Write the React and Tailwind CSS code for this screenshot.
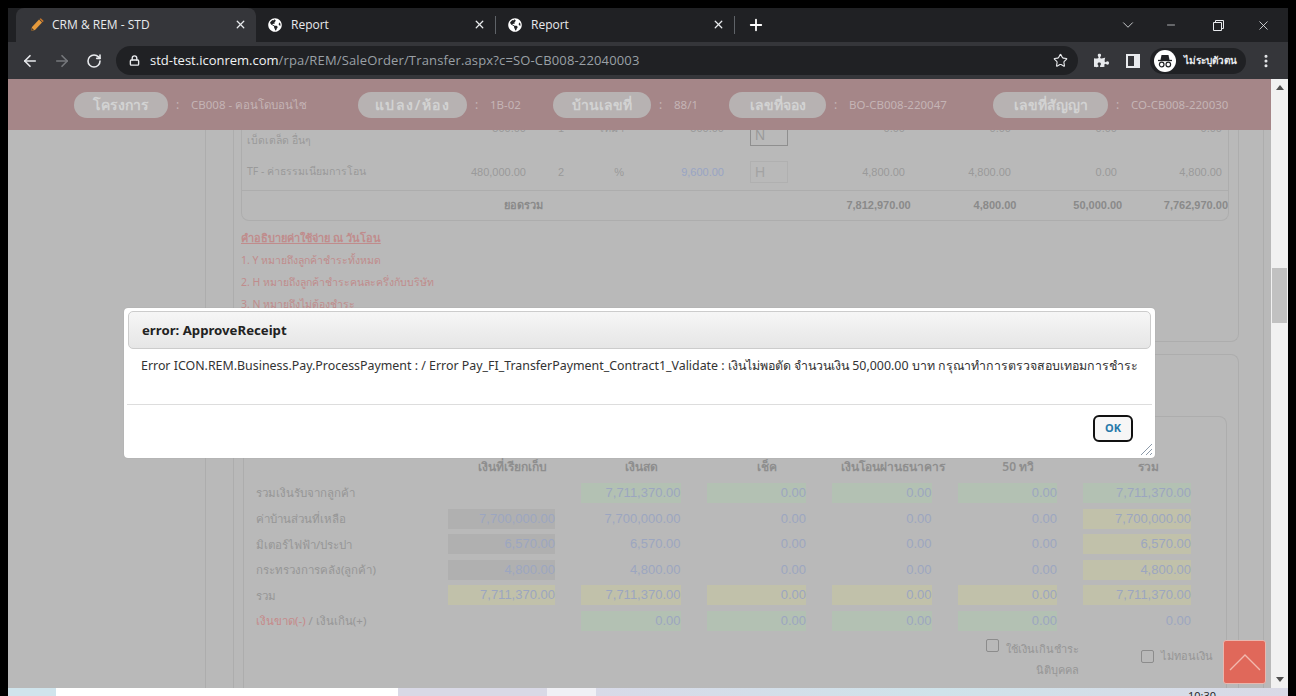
import { FaGlobeAmericas, FaPuzzlePiece } from 'react-icons/fa'
import { ArrowLeft, ArrowRight, RotateCw, Star, Lock, X, Plus, ChevronDown, Minus, EllipsisVertical } from 'lucide-react'

const thai = { fontFamily: '"Noto Sans", "Liberation Sans", sans-serif' }
const arial = { fontFamily: '"Liberation Sans", sans-serif' }

function Tab({ active, title, icon, className }) {
  return (
    <div className={`relative flex h-[34px] items-center ${active ? 'rounded-t-lg bg-[#35363a]' : ''} ${className}`}>
      {icon}
      <span className="text-[12px] text-[#e8eaed]">{title}</span>
      <X size={13} strokeWidth={2.4} className="absolute right-[9px] top-[10px] text-[#e8eaed]" />
    </div>
  )
}

function Pencil() {
  return (
    <svg width="14" height="14" viewBox="0 0 14 14" className="mr-[8px]">
      <path d="M1 13l1-4 7-7.5 3 3L5 12z" fill="#e59a3c" />
      <path d="M9.5 1l3.2 3.2 1-1.2L10.8.3z" fill="#c9772a" />
      <path d="M1 13l1-3 2 2z" fill="#4b3b2a" />
    </svg>
  )
}

function BrowserChrome() {
  return (
    <div className="shrink-0">
      <div className="flex h-[34px] items-center bg-[#202124] pl-2" style={{ fontFamily: '"Open Sans", sans-serif' }}>
        <Tab active title="CRM & REM - STD" icon={<Pencil />} className="w-[240px] pl-[14px]" />
        <Tab
          title="Report"
          icon={<FaGlobeAmericas size={14} className="mr-[9px] text-white" />}
          className="w-[239px] pl-[12px]"
        />
        <div className="h-[18px] w-px bg-[#5f6368]" />
        <Tab
          title="Report"
          icon={<FaGlobeAmericas size={14} className="mr-[9px] text-white" />}
          className="w-[238px] pl-[12px]"
        />
        <div className="h-[18px] w-px bg-[#5f6368]" />
        <Plus size={18} strokeWidth={2.4} className="ml-[12px] text-white" />
        <div className="ml-auto flex items-center text-[#e8eaed]">
          <ChevronDown size={18} strokeWidth={1.1} className="mr-[28px]" />
          <Minus size={12} strokeWidth={1.4} className="mr-[36px]" />
          <svg width="11" height="11" viewBox="0 0 11 11" fill="none" stroke="currentColor" className="mr-[32px]">
            <path d="M.5 2.5h8v8h-8zM2.5 2.5v-2h8v8h-2" />
          </svg>
          <X size={15} strokeWidth={1.3} className="mr-[17px]" />
        </div>
      </div>
      <div className="flex h-[37px] items-center bg-[#35363a]">
        <ArrowLeft size={18} strokeWidth={2.2} className="ml-[13px] text-[#e8eaed]" />
        <ArrowRight size={18} strokeWidth={2.2} className="ml-[14px] text-[#76787c]" />
        <RotateCw size={16} strokeWidth={2.4} className="ml-[15px] text-[#e8eaed]" />
        <div
          className="ml-[14px] flex h-[29px] w-[962px] items-center rounded-full bg-[#202124] pl-[13px] pr-[10px] text-[13px]"
          style={{ fontFamily: '"Open Sans", sans-serif' }}
        >
          <Lock size={11} strokeWidth={3} className="mr-[10px] text-[#e8eaed]" />
          <span className="text-[#f1f3f4]">std-test.iconrem.com</span>
          <span className="tracking-[0.15px] text-[#9aa0a6]">/rpa/REM/SaleOrder/Transfer.aspx?c=SO-CB008-22040003</span>
          <Star size={15} strokeWidth={1.8} className="ml-auto text-[#e8eaed]" />
        </div>
        <FaPuzzlePiece size={15} className="ml-[16px] text-[#e8eaed]" />
        <div className="ml-[17px] h-[14px] w-[14px] border-2 border-r-[6px] border-[#e8eaed]" />
        <div className="ml-[10px] flex h-[26px] w-[96px] items-center rounded-full bg-[#202124] pl-[4px]">
          <div className="flex h-[22px] w-[22px] items-center justify-center rounded-full bg-white">
            <svg width="16" height="14" viewBox="0 0 16 14" fill="none">
              <path d="M4.5 1h7l1 5h-9z" fill="#202124" />
              <path d="M1 6.5h14" stroke="#202124" strokeWidth="1.3" />
              <circle cx="4.7" cy="10.5" r="2.3" stroke="#202124" strokeWidth="1.2" />
              <circle cx="11.3" cy="10.5" r="2.3" stroke="#202124" strokeWidth="1.2" />
            </svg>
          </div>
          <span className="ml-[8px] whitespace-nowrap text-[10px] font-bold text-[#e8eaed]" style={thai}>ไม่ระบุตัวตน</span>
        </div>
        <EllipsisVertical size={16} strokeWidth={2.6} className="ml-[12px] text-[#e8eaed]" />
      </div>
    </div>
  )
}

const infoItems = [
  { label: 'โครงการ', value: 'CB008 - คอนโดบอนไซ', pill: 'w-[94px]' },
  { label: 'แปลง/ห้อง', value: '1B-02', pill: 'w-[109px] tracking-[1.5px]' },
  { label: 'บ้านเลขที่', value: '88/1', pill: 'w-[98px]' },
  { label: 'เลขที่จอง', value: 'BO-CB008-220047', pill: 'w-[97px]' },
  { label: 'เลขที่สัญญา', value: 'CO-CB008-220030', pill: 'w-[115px]' },
]

function InfoHeader() {
  return (
    <div className="grid h-[51px] shrink-0 grid-cols-[284px_195px_176px_264px_auto] items-center bg-[#a58688] pl-[66px]" style={thai}>
      {infoItems.map((item) => (
        <div key={item.label} className="flex items-center">
          <div className={`flex h-[26px] items-center justify-center rounded-full bg-[#b7b2b2] text-[14px] font-semibold text-[#d2d2d2] ${item.pill}`}>
            {item.label}
          </div>
          <span className="ml-[8px] w-[15px] text-[12px] text-[#c4b4b5]">:</span>
          <span className="whitespace-nowrap text-[11.5px] text-[#c4b4b5]">{item.value}</span>
        </div>
      ))}
    </div>
  )
}

const feeCols = 'grid grid-cols-[219px_60px_38px_60px_100px_38px_143px_106px_106px_105px] items-center'

function FeeTable() {
  return (
    <div className="ml-[7px] w-[988px] rounded-b-lg border-x border-b border-[#adadad] text-[11px] text-[#9a9a9a]">
      <div className={`${feeCols} -mt-[27px] h-[51px] pl-[5px]`} style={arial}>
        <span className="self-end pb-[5px] text-[10.5px]" style={thai}>เบ็ดเตล็ด อื่นๆ</span>
        <span className="text-right">500.00</span>
        <span className="text-right">1</span>
        <span className="text-right" style={thai}>เหมา</span>
        <span className="text-right">500.00</span>
        <div className="ml-[26px] mt-[12px] h-[22px] w-[38px] border border-[#8f8f8f] pl-[4px] text-[14px] leading-[20px]">N</div>
        <span className="text-right">0.00</span>
        <span className="text-right">0.00</span>
        <span className="text-right">0.00</span>
        <span className="text-right">0.00</span>
      </div>
      <div className={`${feeCols} h-[37px] border-b border-[#adadad] pl-[5px]`} style={arial}>
        <span className="text-[10.5px]" style={thai}>TF - ค่าธรรมเนียมการโอน</span>
        <span className="text-right">480,000.00</span>
        <span className="text-right">2</span>
        <span className="text-right">%</span>
        <span className="text-right text-[#98a4c4]">9,600.00</span>
        <div className="ml-[26px] h-[22px] w-[38px] border border-[#b0b0b0] pl-[4px] text-[14px] leading-[20px] text-[#a3a3a3]">H</div>
        <span className="text-right">4,800.00</span>
        <span className="text-right">4,800.00</span>
        <span className="text-right">0.00</span>
        <span className="text-right">4,800.00</span>
      </div>
      <div className="flex h-[29px] items-center text-[11px] font-bold text-[#8a8a8a]" style={arial}>
        <span className="ml-[261px] w-[40px] text-right" style={thai}>ยอดรวม</span>
        <span className="ml-[298px] w-[70px] text-right">7,812,970.00</span>
        <span className="ml-[36px] w-[70px] text-right">4,800.00</span>
        <span className="ml-[36px] w-[70px] text-right">50,000.00</span>
        <span className="ml-[36px] w-[70px] text-right">7,762,970.00</span>
      </div>
    </div>
  )
}

const summaryHeads = ['เงินที่เรียกเก็บ', 'เงินสด', 'เช็ค', 'เงินโอนผ่านธนาคาร', '50 ทวิ', 'รวม']

const cellBg = { g: 'bg-[#b3c1b3]', y: 'bg-[#c1c1aa]', d: 'bg-[#b0b0b0]', n: '' }

const summaryRows = [
  { label: 'รวมเงินรับจากลูกค้า', cells: [['', 'n'], ['7,711,370.00', 'g'], ['0.00', 'g'], ['0.00', 'g'], ['0.00', 'g'], ['7,711,370.00', 'g']] },
  { label: 'ค่าบ้านส่วนที่เหลือ', cells: [['7,700,000.00', 'd'], ['7,700,000.00', 'n'], ['0.00', 'n'], ['0.00', 'n'], ['0.00', 'n'], ['7,700,000.00', 'y']] },
  { label: 'มิเตอร์ไฟฟ้า/ประปา', cells: [['6,570.00', 'd'], ['6,570.00', 'n'], ['0.00', 'n'], ['0.00', 'n'], ['0.00', 'n'], ['6,570.00', 'y']] },
  { label: 'กระทรวงการคลัง(ลูกค้า)', cells: [['4,800.00', 'd'], ['4,800.00', 'n'], ['0.00', 'n'], ['0.00', 'n'], ['0.00', 'n'], ['4,800.00', 'y']] },
  { label: 'รวม', cells: [['7,711,370.00', 'y'], ['7,711,370.00', 'y'], ['0.00', 'y'], ['0.00', 'y'], ['0.00', 'y'], ['7,711,370.00', 'y']] },
  {
    label: (
      <>
        <span className="text-[#c58a8a]">เงินขาด(-)</span> / เงินเกิน(+)
      </>
    ),
    cells: [['', 'n'], ['0.00', 'g'], ['0.00', 'g'], ['0.00', 'g'], ['0.00', 'g'], ['0.00', 'n']],
  },
]

const sumCols = 'grid grid-cols-[166px_107px_99.5px_99.5px_99.5px_99.5px_108px] gap-x-[26px]'

function SummaryTable() {
  return (
    <div className="ml-[9px] h-[400px] w-[984px] rounded-t-lg border-x border-t border-[#adadad] pl-[12px] pt-[40px] text-[#969696]">
      <div className={`${sumCols} h-[20.5px] items-center text-[12px] font-semibold text-[#8e8e8e]`}>
        <span />
        {summaryHeads.map((h) => (
          <span key={h} className="flex translate-x-[11px] justify-center whitespace-nowrap">{h}</span>
        ))}
      </div>
      {summaryRows.map((row, i) => (
        <div key={i} className={`${sumCols} mt-[5.6px] h-[20px] items-center text-[11.5px]`}>
          <span className="whitespace-nowrap">{row.label}</span>
          {row.cells.map(([val, tone], j) => (
            <div
              key={j}
              className={`h-[20px] text-right text-[13px] leading-[20px] text-[#9ca6c0] ${cellBg[tone]}`}
              style={arial}
            >
              {val}
            </div>
          ))}
        </div>
      ))}
      <div className="mt-[7px] flex items-start text-[11px]">
        <div className="ml-[731px] flex w-[92px] flex-col items-end whitespace-nowrap leading-[21px]">
          <span className="flex items-center">
            <span className="-mt-[6px] mr-[7px] h-[13px] w-[13px] rounded-[2px] border border-[#8c8c8c]" />
            ใช้เงินเกินชำระ
          </span>
          <span>นิติบุคคล</span>
        </div>
        <span className="ml-[62px] mt-[10px] flex items-center whitespace-nowrap">
          <span className="mr-[7px] h-[13px] w-[13px] rounded-[2px] border border-[#8c8c8c]" />
          ไม่ทอนเงิน
        </span>
      </div>
    </div>
  )
}

function PageBody() {
  return (
    <div className="h-0 flex-1 overflow-hidden">
      <div className="flex h-full">
        <div className="w-[198px] shrink-0 border-r border-[#adadad]" />
        <div className="ml-[27px] w-[1006px] shrink-0">
          <div className="h-[239px] rounded-b-lg border-x border-b border-[#adadad]" style={thai}>
            <FeeTable />
            <div className="ml-[7px] mt-[6px] text-[10.5px] leading-[22px] text-[#c08c8c]">
              <div className="text-[11px] font-bold underline">คำอธิบายค่าใช้จ่าย ณ วันโอน</div>
              <div>1. Y หมายถึงลูกค้าชำระทั้งหมด</div>
              <div>2. H หมายถึงลูกค้าชำระคนละครึ่งกับบริษัท</div>
              <div>3. N หมายถึงไม่ต้องชำระ</div>
            </div>
          </div>
          <div className="mt-[12px] h-[400px] rounded-t-lg border-x border-t border-[#adadad] pt-[61px]" style={thai}>
            <SummaryTable />
          </div>
        </div>
        <div className="ml-[24px] h-full w-px bg-[#adadad]" />
      </div>
    </div>
  )
}

function Scrollbar() {
  return (
    <div className="flex w-[17px] shrink-0 flex-col items-center bg-[#f1f1f1]">
      <div className="mt-[6px] h-0 w-0 border-x-[4px] border-b-[5px] border-x-transparent border-b-[#505050]" />
      <div className="mt-[178px] h-[55px] w-[15px] bg-[#c1c1c1]" />
      <div className="mt-auto mb-[6px] h-0 w-0 border-x-[4px] border-t-[5px] border-x-transparent border-t-[#505050]" />
    </div>
  )
}

function ErrorDialog() {
  return (
    <div
      className="absolute left-[124px] top-[308px] h-[150px] w-[1031px] rounded-[4px] bg-white p-[3px] shadow-[0_0_1px_#999]"
      style={{ fontFamily: '"Noto Sans", sans-serif' }}
    >
      <div className="mx-px flex h-[38px] items-center rounded-[5px] border border-[#cccccc] bg-gradient-to-b from-[#f6f6f6] to-[#e6e6e6] pl-[13px] pt-px text-[13.2px] font-bold text-[#222222]">
        error: ApproveReceipt
      </div>
      <div className="h-[56px] border-b border-[#dddddd] pl-[14px] pt-[7px] text-[12.4px] leading-[20px] whitespace-nowrap text-[#333333]">
        Error ICON.REM.Business.Pay.ProcessPayment : / Error Pay_FI_TransferPayment_Contract1_Validate : เงินไม่พอตัด จำนวนเงิน 50,000.00 บาท กรุณาทำการตรวจสอบเทอมการชำระ
      </div>
      <div className="flex justify-end pr-[19px] pt-[10px]">
        <button className="h-[27px] w-[40px] rounded-[6px] border-2 border-[#111111] bg-[#f6f6f6] text-[11px] font-bold text-[#2779aa]">
          OK
        </button>
      </div>
      <svg width="12" height="12" viewBox="0 0 12 12" className="absolute bottom-[3px] right-[3px]" stroke="#7f8f9f" strokeWidth="0.9">
        <path d="M1 12L12 1M6 12l6-6M10 12l2-2" />
      </svg>
    </div>
  )
}

export default function App() {
  return (
    <div className="relative flex h-[696px] w-[1296px] flex-col overflow-hidden bg-black pl-2 pr-2 pt-2">
      <BrowserChrome />
      <div className="flex h-0 flex-1">
        <div className="flex w-[1263px] shrink-0 flex-col bg-[#b9b9b9]">
          <InfoHeader />
          <PageBody />
        </div>
        <Scrollbar />
      </div>
      <div className="flex h-[8px] shrink-0 overflow-hidden">
        <div className="h-full w-[48px] bg-[#d0e4ec]" />
        <div className="h-full w-[342px] bg-white" />
        <div className="h-full w-[149px] bg-[#d9d9e6]" />
        <div className="h-full w-[49px] bg-[#f0f0f5]" />
        <div className="flex h-full flex-1 justify-end bg-gradient-to-r from-[#d8dae8] via-[#cfe3ea] to-[#d9d9e6]">
          <span className="mr-[72px] mt-[2px] text-[11px] leading-[12px] text-[#222222]" style={{ fontFamily: '"Open Sans", sans-serif' }}>10:30</span>
        </div>
      </div>
      <ErrorDialog />
      <div className="absolute left-[1223px] top-[640px] flex h-[44px] w-[43px] items-center justify-center rounded-[3px] border border-[#e9b7ae] bg-[#e0685a]">
        <svg width="34" height="20" viewBox="0 0 34 20" fill="none" stroke="#f2b9ae" strokeWidth="1.4">
          <path d="M2 18L17 3l15 15" />
        </svg>
      </div>
    </div>
  )
}
